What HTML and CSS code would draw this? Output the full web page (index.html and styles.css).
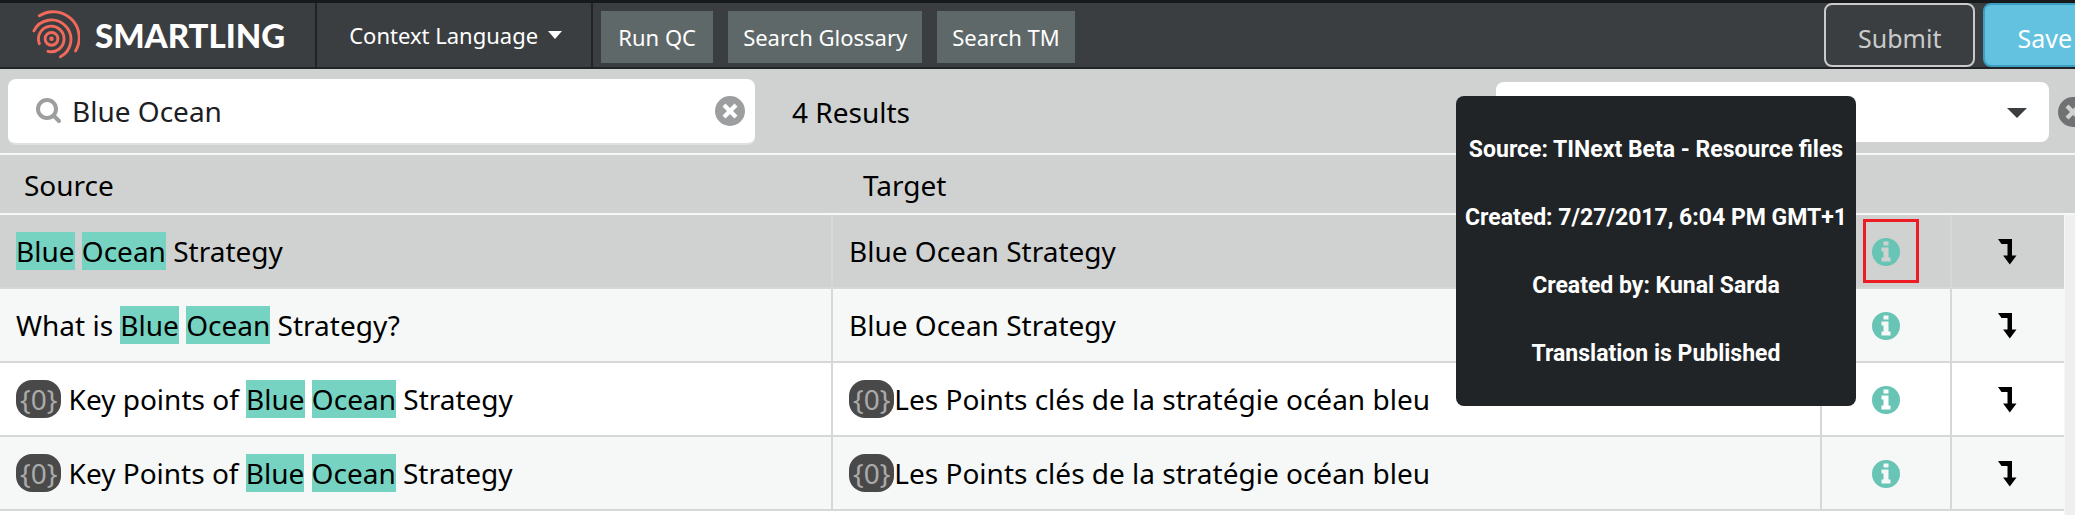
FILE: index.html
```html
<!DOCTYPE html>
<html lang="en">
<head>
<meta charset="utf-8">
<title>Smartling - Search TM</title>
<link rel="stylesheet" href="styles.css">
</head>
<body>
<svg class="sprite" aria-hidden="true">
  <symbol id="icon-info" viewBox="0 0 28 28">
    <path fill-rule="evenodd" d="M14 0a14 14 0 1 1 0 28a14 14 0 0 1 0-28ZM11.500 3.500h5v4h-5ZM9.500 9.500h7v10h2v4h-9v-4h2v-6h-2Z"/>
  </symbol>
  <symbol id="icon-insert" viewBox="0 0 20 26">
    <path d="M0 0h14v16.500h4.500l-6.700 9l-6.700-9h4.400V5H3.500Z"/>
  </symbol>
  <symbol id="icon-clear" viewBox="0 0 30 30">
    <path fill-rule="evenodd" d="M15 0a15 15 0 1 1 0 30a15 15 0 0 1 0-30ZM10.500 7.500L7.500 10.500L12 15L7.500 19.500L10.500 22.500L15 18L19.500 22.500L22.500 19.500L18 15L22.500 10.500L19.500 7.500L15 12Z"/>
  </symbol>
</svg>

<header class="topbar">
  <a class="brand" href="#">
    <svg class="brand-mark" viewBox="0 0 150 150" aria-hidden="true">
      <g fill="none" stroke="#f16a5b" stroke-width="9" stroke-linecap="round">
        <circle cx="61" cy="87" r="20"/>
        <path d="M23 102A40 40 0 1 1 50 126"/>
        <path d="M6 62A61 61 0 1 1 89 143"/>
        <path d="M23 15A81 81 0 0 1 136 125"/>
      </g>
      <circle cx="61" cy="87" r="7" fill="#f16a5b"/>
    </svg>
    <span class="brand-name">SMARTLING</span>
  </a>
  <button class="language" type="button">Context Language <span class="caret"></span></button>
  <nav class="tools">
    <button class="tool" type="button">Run QC</button>
    <button class="tool" type="button">Search Glossary</button>
    <button class="tool" type="button">Search TM</button>
  </nav>
  <div class="actions">
    <button class="action submit" type="button">Submit</button>
    <button class="action save" type="button">Save</button>
  </div>
</header>

<section class="filters">
  <div class="search">
    <svg class="search-icon" viewBox="0 0 26 26" aria-hidden="true">
      <g fill="none" stroke="#9c9e9f" stroke-width="4" stroke-linecap="round"><circle cx="11" cy="11" r="9"/><path d="M18 18l5 5"/></g>
    </svg>
    <input class="search-input" type="text" value="Blue Ocean" aria-label="Search text">
    <button class="clear" type="button" aria-label="Clear search"><svg viewBox="0 0 30 30"><use href="#icon-clear"/></svg></button>
  </div>
  <span class="count">4 Results</span>
  <div class="scope">
    <select class="scope-select" aria-label="Filter results"><option></option></select>
    <span class="caret scope-caret"></span>
  </div>
  <button class="clear close" type="button" aria-label="Close search"><svg viewBox="0 0 30 30"><use href="#icon-clear"/></svg></button>
</section>

<main class="results">
  <table class="grid">
    <colgroup><col class="col-source"><col><col class="col-info"><col class="col-insert"></colgroup>
    <thead>
      <tr><th scope="col">Source</th><th scope="col" class="target-head">Target</th><td></td><td></td></tr>
    </thead>
    <tbody>
      <tr class="selected">
        <td><mark>Blue</mark> <mark>Ocean</mark> Strategy</td>
        <td>Blue Ocean Strategy</td>
        <td class="icon-cell">
          <button class="info outlined" type="button" aria-label="Details" aria-describedby="details"><svg viewBox="0 0 28 28"><use href="#icon-info"/></svg></button>
          <div class="tooltip" id="details" role="tooltip">
            <p>Source: TINext Beta - Resource files</p>
            <p>Created: 7/27/2017, 6:04 PM GMT+1</p>
            <p>Created by: Kunal Sarda</p>
            <p>Translation is Published</p>
          </div>
        </td>
        <td class="icon-cell"><button class="insert" type="button" aria-label="Insert"><svg viewBox="0 0 20 26"><use href="#icon-insert"/></svg></button></td>
      </tr>
      <tr>
        <td>What is <mark>Blue</mark> <mark>Ocean</mark> Strategy?</td>
        <td>Blue Ocean Strategy</td>
        <td class="icon-cell"><button class="info" type="button" aria-label="Details"><svg viewBox="0 0 28 28"><use href="#icon-info"/></svg></button></td>
        <td class="icon-cell"><button class="insert" type="button" aria-label="Insert"><svg viewBox="0 0 20 26"><use href="#icon-insert"/></svg></button></td>
      </tr>
      <tr>
        <td><span class="tag">{0}</span> Key points of <mark>Blue</mark> <mark>Ocean</mark> Strategy</td>
        <td><span class="tag">{0}</span>Les Points clés de la stratégie océan bleu</td>
        <td class="icon-cell"><button class="info" type="button" aria-label="Details"><svg viewBox="0 0 28 28"><use href="#icon-info"/></svg></button></td>
        <td class="icon-cell"><button class="insert" type="button" aria-label="Insert"><svg viewBox="0 0 20 26"><use href="#icon-insert"/></svg></button></td>
      </tr>
      <tr>
        <td><span class="tag">{0}</span> Key Points of <mark>Blue</mark> <mark>Ocean</mark> Strategy</td>
        <td><span class="tag">{0}</span>Les Points clés de la stratégie océan bleu</td>
        <td class="icon-cell"><button class="info" type="button" aria-label="Details"><svg viewBox="0 0 28 28"><use href="#icon-info"/></svg></button></td>
        <td class="icon-cell"><button class="insert" type="button" aria-label="Insert"><svg viewBox="0 0 20 26"><use href="#icon-insert"/></svg></button></td>
      </tr>
    </tbody>
  </table>
  <div class="track"><div class="track-head"></div><div class="track-body"></div></div>
</main>
</body>
</html>
```
FILE: styles.css
```css
* { box-sizing: border-box; }

body {
  margin: 0;
  min-height: 100vh;
  display: flex;
  flex-direction: column;
  overflow: hidden;
  background: #fff;
  color: #000;
  font: 28px/38px "Noto Sans", sans-serif;
}

button, input, select {
  margin: 0;
  padding: 0;
  border: 0;
  background: none;
  font: inherit;
  color: inherit;
}

svg { display: block; }
.sprite { position: absolute; width: 0; height: 0; }

.caret {
  width: 0;
  height: 0;
  border: solid transparent;
  border-width: 8px 7px 0;
  border-top-color: currentColor;
}

/* Top bar */
.topbar {
  display: flex;
  overflow: hidden;
  background: #3b3e41;
  border-top: 3px solid #18191b;
  border-bottom: 2px solid #212427;
  color: #fff;
  font-size: 22px;
  line-height: 30px;
}
.brand {
  display: flex;
  align-items: center;
  gap: 15px;
  padding: 0 30px 0 32px;
  border-right: 2px solid #212427;
  color: #fff;
  text-decoration: none;
}
.brand-mark { width: 48px; height: 50px; }
.brand-name { font: 900 33px/40px Lato, sans-serif; }
.language {
  display: flex;
  align-items: center;
  gap: 10px;
  padding: 0 29px 0 32px;
  border-right: 2px solid #212427;
}
.tools { display: flex; gap: 15px; padding: 8px 8px 4px; }
.tool { min-width: 112px; height: 52px; padding: 0 15px; background: #5f6869; }
.actions {
  display: flex;
  flex: none;
  gap: 8px;
  margin-left: auto;
  margin-right: -31px;
  font-size: 25px;
}
.action {
  height: 64px;
  padding: 6px 32px 0;
  border: 2px solid #c9cbca;
  border-radius: 8px;
}
.submit { color: #c9cbca; }
.save { background: #62c2e0; border-color: #3a9fc0; }

/* Search row */
.filters {
  display: flex;
  align-items: center;
  height: 86px;
  padding: 2px 0 0 8px;
  overflow: hidden;
  background: #d0d2d1;
  border-bottom: 2px solid #f6f8f7;
}
.search {
  display: flex;
  align-items: center;
  width: 36.14%;
  height: 66px;
  padding: 0 10px 0 28px;
  background: #fff;
  border-bottom: 2px solid #dfe1e0;
  border-radius: 8px;
}
.search-icon { width: 26px; height: 26px; margin-right: 10px; }
.search-input { flex: 1; min-width: 0; height: 48px; color: #1d2023; outline: 0; }
.clear { flex: none; width: 30px; height: 30px; fill: #9c9e9f; }
.count { margin-left: 37px; }
.scope { position: relative; width: 553px; margin-left: auto; }
.scope-select {
  appearance: none;
  display: block;
  width: 100%;
  height: 60px;
  background: #fff;
  border-radius: 8px;
}
.scope-caret {
  position: absolute;
  top: 26px;
  right: 22px;
  border-width: 10px 10px 0;
  color: #3b3e41;
  pointer-events: none;
}
.close { margin: 0 -13px 0 9px; fill: #6f7172; }

/* Results */
.results { display: flex; flex: 1; align-items: stretch; }
.grid {
  flex: 1;
  align-self: flex-start;
  table-layout: fixed;
  border-collapse: separate;
  border-spacing: 0;
}
.col-source { width: 40.36%; }
.col-info { width: 130px; }
.col-insert { width: 112px; }

.grid th, .grid td { padding: 0 16px; text-align: left; }
.grid thead th, .grid thead td, .track-head {
  height: 60px;
  background: #d0d2d1;
  border-bottom: 2px solid #f6f8f7;
  font-weight: 400;
}
.grid thead th { padding: 2px 24px 0; }
.grid thead .target-head { padding-left: 30px; }

.grid tbody td {
  height: 74px;
  border-right: 2px solid #d6d8d7;
  border-bottom: 2px solid #d6d8d7;
}
.grid tbody td:last-child { border-right: 0; }
.grid tbody tr:nth-child(even) { background: #f6f8f7; }
.grid tbody .selected { background: #d0d2d1; }

mark { background: #76d3c1; color: inherit; }
.tag {
  display: inline-block;
  padding: 0 4px;
  border-radius: 16px;
  background: #484948;
  color: #a9abaa;
}

.grid .icon-cell { position: relative; padding: 0 0 0 41px; }
.info {
  display: block;
  width: 56px;
  height: 64px;
  padding: 2px 6px 0;
  border: 3px solid transparent;
}
.info svg { width: 28px; height: 28px; fill: #68c4b5; }
.outlined { border-color: #ed1c24; }
.insert { display: block; margin: 2px 0 0 5px; }
.insert svg { width: 20px; height: 26px; }

.tooltip {
  position: absolute;
  z-index: 1;
  top: -119px;
  right: 94px;
  width: 400px;
  padding: 20px 0 18px;
  border-radius: 8px;
  background: #212427;
  color: #fff;
  font: bold 23px/68px Roboto, sans-serif;
  text-align: center;
  white-space: nowrap;
}
.tooltip p { margin: 0; }

.track { display: flex; flex: none; flex-direction: column; width: 11px; }
.track-body { flex: 1; background: #efefef; border-left: 1px solid #f6f8f7; }
```
